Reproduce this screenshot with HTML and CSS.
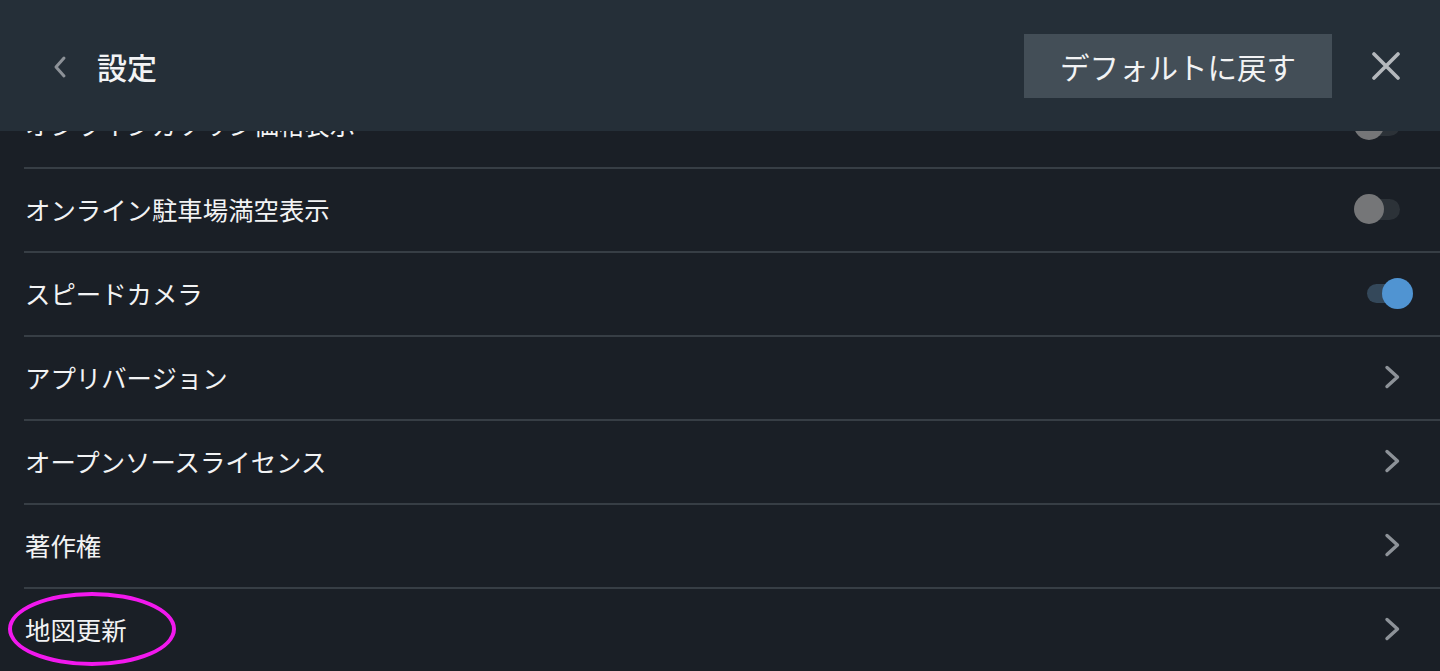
FILE: index.html
```html
<!DOCTYPE html>
<html lang="ja">
<head>
<meta charset="UTF-8">
<title>設定</title>
<link rel="stylesheet" href="styles.css">
</head>
<body>
<div class="screen">
    <header class="topbar">
        <button class="back" aria-label="戻る">
            <svg width="14" height="24" viewBox="0 0 14 24"><path d="M11 3 L3 12 L11 21" fill="none" stroke="#8d9298" stroke-width="3" stroke-linecap="round" stroke-linejoin="round"/></svg>
        </button>
        <h1 class="title">設定</h1>
        <button class="reset">デフォルトに戻す</button>
        <button class="close" aria-label="閉じる">
            <svg width="28" height="28" viewBox="0 0 28 28"><path d="M2 2 L26 26 M26 2 L2 26" stroke="#b4b8bc" stroke-width="3.6" stroke-linecap="round"/></svg>
        </button>
    </header>

    <ul class="settings">
        <li class="row">
            <span>オンラインガソリン価格表示</span>
            <span class="toggle"></span>
        </li>
        <li class="row">
            <span>オンライン駐車場満空表示</span>
            <span class="toggle"></span>
        </li>
        <li class="row">
            <span>スピードカメラ</span>
            <span class="toggle on"></span>
        </li>
        <li class="row">
            <span>アプリバージョン</span>
            <svg class="chevron" width="16" height="24" viewBox="0 0 16 24"><path d="M3 2.5 L13.5 12 L3 21.5" fill="none" stroke="#8d9298" stroke-width="3.4" stroke-linecap="round" stroke-linejoin="round"/></svg>
        </li>
        <li class="row">
            <span>オープンソースライセンス</span>
            <svg class="chevron" width="16" height="24" viewBox="0 0 16 24"><path d="M3 2.5 L13.5 12 L3 21.5" fill="none" stroke="#8d9298" stroke-width="3.4" stroke-linecap="round" stroke-linejoin="round"/></svg>
        </li>
        <li class="row">
            <span>著作権</span>
            <svg class="chevron" width="16" height="24" viewBox="0 0 16 24"><path d="M3 2.5 L13.5 12 L3 21.5" fill="none" stroke="#8d9298" stroke-width="3.4" stroke-linecap="round" stroke-linejoin="round"/></svg>
        </li>
        <li class="row marked">
            <span>地図更新</span>
            <svg class="chevron" width="16" height="24" viewBox="0 0 16 24"><path d="M3 2.5 L13.5 12 L3 21.5" fill="none" stroke="#8d9298" stroke-width="3.4" stroke-linecap="round" stroke-linejoin="round"/></svg>
        </li>
    </ul>
</div>
</body>
</html>
```
FILE: styles.css
```css
html,
body {
    margin: 0;
    height: 100%;
    background: #1a1f26;
}

body,
button {
    font-family: 'Noto Sans CJK JP', 'Noto Sans', sans-serif;
    color: #f2f3f4;
}

.screen {
    position: relative;
    height: 671px;
    overflow: hidden;
}

/* header sits over the scrolled list */
.topbar {
    position: absolute;
    top: 0;
    left: 0;
    right: 0;
    z-index: 2;
    height: 131px;
    display: flex;
    align-items: center;
    background: #252f38;
    box-sizing: border-box;
    padding: 0 40px 0 53px;
}

.back,
.close {
    border: 0;
    background: none;
    padding: 0;
    display: flex;
    cursor: pointer;
}

.back {
    margin-top: 2px;
}

.title {
    flex: 1;
    margin: 0 0 0 30px;
    font-size: 30px;
    font-weight: 500;
    line-height: 1;
}

.reset {
    width: 308px;
    height: 64px;
    border: 0;
    margin-top: 1px;
    background: #434e57;
    font-size: 29.5px;
}

.close {
    margin-left: 40px;
}

.settings {
    list-style: none;
    margin: 0;
    padding: 85px 0 0 24px;
}

.row {
    position: relative;
    height: 84px;
    display: flex;
    align-items: center;
    justify-content: space-between;
    padding: 0 40px 2px 1px;
    font-size: 25.4px;
    border-bottom: 2px solid #373e45;
    box-sizing: border-box;
}

.row:first-child span:first-child {
    margin-top: -2px;
}

.toggle {
    position: relative;
    width: 45px;
    height: 21px;
    border-radius: 11px;
    background: #2c3238;
}

.toggle::after {
    content: '';
    position: absolute;
    left: -1px;
    top: -5px;
    width: 30px;
    height: 30px;
    border-radius: 50%;
    background: #757678;
}

.toggle.on {
    width: 33px;
    height: 19px;
    border-radius: 10px;
    background: #34485a;
}

.toggle.on::after {
    left: auto;
    right: -13px;
    top: -6px;
    width: 31px;
    height: 31px;
    background: #5094d2;
}

.chevron {
    display: block;
    margin-right: 0;
}

/* magenta annotation ring */
.marked::before {
    content: '';
    position: absolute;
    left: -16px;
    top: 3px;
    width: 160px;
    height: 66px;
    border: 4px solid #f218ee;
    border-radius: 50%;
}
```
